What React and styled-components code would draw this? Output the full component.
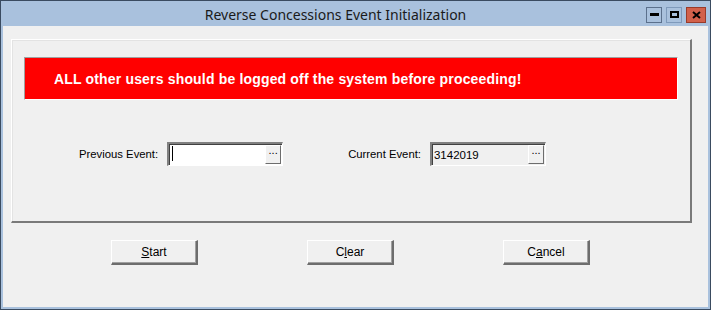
import styled, { createGlobalStyle } from "styled-components"

const Global = createGlobalStyle`
    html, body { margin: 0; padding: 0; background: #f0f0f0; }
    body { font-family: "Liberation Sans", Arial, sans-serif; }
`

const Window = styled.div`
    width: 711px;
    height: 310px;
    box-sizing: border-box;
    border: 1px solid #3a4b60;
    background: #a9c1dd;
    padding: 0 2px 2px 2px;
    display: flex;
    flex-direction: column;
`
const TitleBar = styled.div`
    height: 25px;
    position: relative;
    display: flex;
    align-items: center;
    justify-content: center;
    padding-right: 40px;
`
const Title = styled.span`
    font-family: "Noto Sans", "Open Sans", sans-serif;
    font-size: 14px;
    color: #1a1a1a;
    margin-top: 1px;
`
const Controls = styled.div`
    position: absolute;
    right: 2px;
    top: 6px;
    display: flex;
    gap: 4px;
`
const CtrlButton = styled.div`
    width: ${p => p.close ? 20 : 16}px;
    height: 16px;
    box-sizing: border-box;
    border: 1px solid ${p => p.close ? "#9a3b2a" : p.light ? "#7f9abb" : "#5b708c"};
    background: ${p => p.close ? "#d2614b" : "#a9c1dd"};
    display: flex;
    align-items: center;
    justify-content: center;
`
const Client = styled.div`
    flex: 1;
    background: #f0f0f0;
    padding: 13px 16px 0 8px;
    display: flex;
    flex-direction: column;
`
const GroupBox = styled.div`
    height: 184px;
    box-sizing: border-box;
    border-top: 1px solid #ffffff;
    border-left: 1px solid #ffffff;
    border-right: 2px solid #7a7a7a;
    border-bottom: 2px solid #7a7a7a;
    box-shadow: inset 1px 1px 0 #e3e3e3;
    padding: 17px 12px 0 12px;
`
const Banner = styled.div`
    height: 43px;
    box-sizing: border-box;
    background: #ff0000;
    border-top: 1px solid #a0a0a0;
    border-left: 1px solid #a0a0a0;
    border-right: 1px solid #ffffff;
    border-bottom: 1px solid #ffffff;
    display: flex;
    align-items: center;
    padding-left: 29px;
    color: #ffffff;
    font-weight: bold;
    font-size: 14px;
    letter-spacing: 0.17px;
`
const FieldRow = styled.div`
    display: flex;
    align-items: center;
    margin-top: 42px;
    padding-left: 55px;
`
const Label = styled.span`
    font-size: 11.3px;
    color: #000;
    margin-right: 9px;
    margin-left: ${p => p.offset || 0}px;
`
const Field = styled.div`
    width: 116px;
    height: 24px;
    box-sizing: border-box;
    border-top: 2px solid #808080;
    border-left: 2px solid #808080;
    border-right: 1px solid #ffffff;
    border-bottom: 1px solid #ffffff;
    box-shadow: inset 1px 1px 0 #404040;
    background: ${p => p.readonly ? "#f0f0f0" : "#ffffff"};
    display: flex;
    align-items: center;
    padding: 1px 1px 1px 2px;
`
const FieldText = styled.span`
    flex: 1;
    font-size: 11.5px;
    color: #000;
`
const Caret = styled.span`
    display: inline-block;
    width: 1px;
    height: 15px;
    background: #000;
    margin-left: 1px;
`
const DotsButton = styled.div`
    width: 16px;
    height: 19px;
    box-sizing: border-box;
    border-top: 1px solid #ffffff;
    border-left: 1px solid #ffffff;
    border-right: 1px solid #6d6d6d;
    border-bottom: 1px solid #6d6d6d;
    background: #f0f0f0;
    font-size: 11px;
    line-height: 19px;
    text-align: center;
    color: #000;
    display: flex;
    align-items: flex-end;
    justify-content: center;
    padding-bottom: 3px;
`
const ButtonRow = styled.div`
    display: flex;
    gap: 109px;
    margin-top: 17px;
    padding-left: 100px;
`
const Button = styled.div`
    width: 87px;
    height: 25px;
    box-sizing: border-box;
    border-top: 1px solid #ffffff;
    border-left: 1px solid #ffffff;
    border-right: 2px solid #6d6d6d;
    border-bottom: 2px solid #6d6d6d;
    box-shadow: inset -1px -1px 0 #a0a0a0;
    background: #f0f0f0;
    display: flex;
    align-items: center;
    justify-content: center;
    font-size: 12px;
    color: #000;
    u { text-decoration: underline; }
`

export default function App() {
    return (
        <Window>
            <Global />
            <TitleBar>
                <Title>Reverse Concessions Event Initialization</Title>
                <Controls>
                    <CtrlButton>
                        <svg width="9" height="4"><rect x="0" y="0" width="9" height="3" fill="#000" /></svg>
                    </CtrlButton>
                    <CtrlButton light>
                        <svg width="9" height="8"><rect x="1" y="1" width="7" height="5" fill="none" stroke="#000" strokeWidth="2" /></svg>
                    </CtrlButton>
                    <CtrlButton close>
                        <svg width="9" height="8"><path d="M1 1 L8 7 M8 1 L1 7" stroke="#000" strokeWidth="2" /></svg>
                    </CtrlButton>
                </Controls>
            </TitleBar>
            <Client>
                <GroupBox>
                    <Banner>ALL other users should be logged off the system before proceeding!</Banner>
                    <FieldRow>
                        <Label>Previous Event:</Label>
                        <Field>
                            <FieldText><Caret /></FieldText>
                            <DotsButton>...</DotsButton>
                        </Field>
                        <Label offset={65}>Current Event:</Label>
                        <Field readonly>
                            <FieldText>3142019</FieldText>
                            <DotsButton>...</DotsButton>
                        </Field>
                    </FieldRow>
                </GroupBox>
                <ButtonRow>
                    <Button><span><u>S</u>tart</span></Button>
                    <Button><span>C<u>l</u>ear</span></Button>
                    <Button><span>C<u>a</u>ncel</span></Button>
                </ButtonRow>
            </Client>
        </Window>
    )
}
